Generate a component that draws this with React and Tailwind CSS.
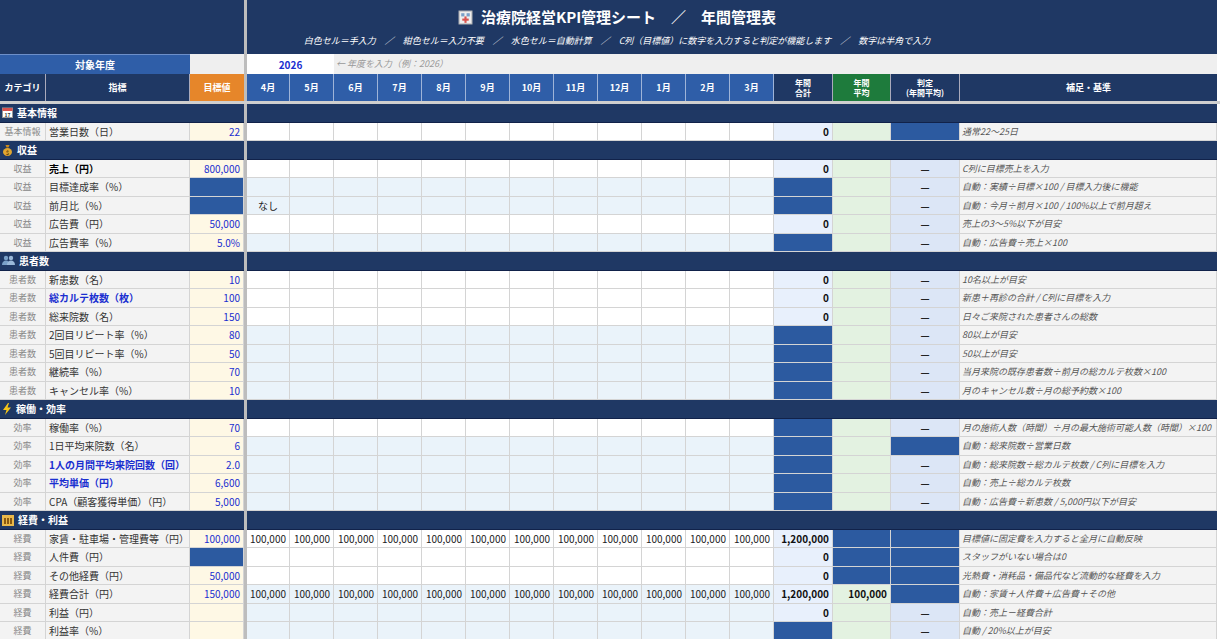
const F = '"Noto Sans CJK JP", "Liberation Sans", sans-serif';
const COLS = 'grid grid-cols-[46px_144px_54px_3px_43px_44px_44px_44px_44px_44px_44px_44px_44px_44px_44px_44px_59px_58px_69px_257px]';
const months = ['4月','5月','6月','7月','8月','9月','10月','11月','12月','1月','2月','3月'];
const B = 'border-r border-b border-[#d4d4d4]';

const rows = [
 {h:'基本情報', ic:'cal'},
 {c:'基本情報',l:'営業日数（日）',t:'22',m:'w',tot:'0',j:'fill',n:'通常22〜25日'},
 {h:'収益', ic:'bag'},
 {c:'収益',l:'売上（円）',lb:'k',t:'800,000',m:'w',tot:'0',j:'—',n:'C列に目標売上を入力'},
 {c:'収益',l:'目標達成率（%）',t:'fill',m:'b',tot:'fill',j:'—',n:'自動：実績÷目標×100 / 目標入力後に機能'},
 {c:'収益',l:'前月比（%）',t:'fill',m:'b',first:'なし',tot:'fill',j:'—',n:'自動：今月÷前月×100 / 100%以上で前月超え'},
 {c:'収益',l:'広告費（円）',t:'50,000',m:'w',tot:'0',j:'—',n:'売上の3〜5%以下が目安'},
 {c:'収益',l:'広告費率（%）',t:'5.0%',m:'b',tot:'fill',j:'—',n:'自動：広告費÷売上×100'},
 {h:'患者数', ic:'ppl'},
 {c:'患者数',l:'新患数（名）',t:'10',m:'w',tot:'0',j:'—',n:'10名以上が目安'},
 {c:'患者数',l:'総カルテ枚数（枚）',lb:'b',t:'100',m:'w',tot:'0',j:'—',n:'新患＋再診の合計 / C列に目標を入力'},
 {c:'患者数',l:'総来院数（名）',t:'150',m:'w',tot:'0',j:'—',n:'日々ご来院された患者さんの総数'},
 {c:'患者数',l:'2回目リピート率（%）',t:'80',m:'b',tot:'fill',j:'—',n:'80以上が目安'},
 {c:'患者数',l:'5回目リピート率（%）',t:'50',m:'b',tot:'fill',j:'—',n:'50以上が目安'},
 {c:'患者数',l:'継続率（%）',t:'70',m:'b',tot:'fill',j:'—',n:'当月来院の既存患者数÷前月の総カルテ枚数×100'},
 {c:'患者数',l:'キャンセル率（%）',t:'10',m:'b',tot:'fill',j:'—',n:'月のキャンセル数÷月の総予約数×100'},
 {h:'稼働・効率', ic:'bolt'},
 {c:'効率',l:'稼働率（%）',t:'70',m:'w',tot:'fill',j:'—',n:'月の施術人数（時間）÷月の最大施術可能人数（時間）×100'},
 {c:'効率',l:'1日平均来院数（名）',t:'6',m:'b',tot:'fill',j:'fill',n:'自動：総来院数÷営業日数'},
 {c:'効率',l:'1人の月間平均来院回数（回）',lb:'b',t:'2.0',m:'b',tot:'fill',j:'—',n:'自動：総来院数÷総カルテ枚数 / C列に目標を入力'},
 {c:'効率',l:'平均単価（円）',lb:'b',t:'6,600',m:'b',tot:'fill',j:'—',n:'自動：売上÷総カルテ枚数'},
 {c:'効率',l:'CPA（顧客獲得単価）（円）',t:'5,000',m:'b',tot:'fill',j:'—',n:'自動：広告費÷新患数 / 5,000円以下が目安'},
 {h:'経費・利益', ic:'bank'},
 {c:'経費',l:'家賃・駐車場・管理費等（円）',t:'100,000',m:'w',mv:'100,000',tot:'1,200,000',avg:'fill',j:'fill',n:'目標値に固定費を入力すると全月に自動反映'},
 {c:'経費',l:'人件費（円）',t:'fill',m:'w',tot:'0',avg:'fill',j:'fill',n:'スタッフがいない場合は0'},
 {c:'経費',l:'その他経費（円）',t:'50,000',m:'w',tot:'0',avg:'fill',j:'fill',n:'光熱費・消耗品・備品代など流動的な経費を入力'},
 {c:'経費',l:'経費合計（円）',t:'150,000',m:'b',mv:'100,000',tot:'1,200,000',avg:'100,000',j:'fill',n:'自動：家賃＋人件費＋広告費＋その他'},
 {c:'経費',l:'利益（円）',t:'',m:'b',tot:'0',j:'—',n:'自動：売上－経費合計'},
 {c:'経費',l:'利益率（%）',t:'',m:'b',tot:'fill',j:'—',n:'自動 / 20%以上が目安'},
];

function Icon({k}) {
  if (k==='cal') return (<svg width="11" height="11" viewBox="0 0 11 11"><rect x="0.5" y="1" width="10" height="9.5" fill="#fff" stroke="#999"/><rect x="0.5" y="1" width="10" height="3" fill="#d9534f"/><text x="5.5" y="9.5" fontSize="5" textAnchor="middle" fill="#333">17</text></svg>);
  if (k==='bag') return (<svg width="11" height="12" viewBox="0 0 11 12"><path d="M3.5 1h4l-1 2.5h-2z" fill="#c98a1d"/><ellipse cx="5.5" cy="8" rx="4.5" ry="4" fill="#e0a630"/><text x="5.5" y="10.5" fontSize="6" textAnchor="middle" fill="#6b4a0a">$</text></svg>);
  if (k==='ppl') return (<svg width="13" height="11" viewBox="0 0 13 11"><circle cx="4" cy="3" r="2.2" fill="#7aa0c8"/><path d="M0 10c0-3 1.8-4.5 4-4.5S8 7 8 10z" fill="#7aa0c8"/><circle cx="9" cy="3" r="2.2" fill="#9ab8d8"/><path d="M5 10c0-3 1.8-4.5 4-4.5S13 7 13 10z" fill="#9ab8d8"/></svg>);
  if (k==='bolt') return (<svg width="10" height="12" viewBox="0 0 10 12"><path d="M6 0L1 7h3.5L3 12l6-7.5H5.5L7 0z" fill="#f5c518"/></svg>);
  if (k==='bank') return (<svg width="12" height="12" viewBox="0 0 12 12"><rect x="0" y="1" width="12" height="11" fill="#e9b84a"/><rect x="2" y="4" width="2" height="6" fill="#8a5a10"/><rect x="5" y="4" width="2" height="6" fill="#8a5a10"/><rect x="8" y="4" width="2" height="6" fill="#8a5a10"/></svg>);
  return (<svg width="15" height="15" viewBox="0 0 14 14"><rect x="1" y="1" width="12" height="12" fill="#eee" stroke="#bbb"/><rect x="3" y="3" width="3" height="3" fill="#7aa0c8"/><rect x="8" y="3" width="3" height="3" fill="#7aa0c8"/><rect x="6" y="6" width="2" height="6" fill="#d9534f"/><rect x="4" y="8" width="6" height="2" fill="#d9534f"/></svg>);
}

const Fill = () => <div className={`${B} bg-[#2c5aa0]`} />;

function Row({r}) {
  if (r.h) return (
    <div className={`${COLS} h-[18.5px]`}>
      <div className="col-span-3 bg-[#1f3864] border-b border-[#11224a] flex items-center gap-1 pl-[2px] text-white font-bold text-[10px]"><Icon k={r.ic}/>{r.h}</div>
      <div className="bg-[#bdbdbd]" />
      <div className="col-span-16 bg-[#1f3864] border-b border-[#11224a]" />
    </div>
  );
  const mbg = r.m==='w' ? 'bg-white' : 'bg-[#eaf3fa]';
  const lc = r.lb==='b' ? 'font-bold text-[#1a2fd0]' : r.lb==='k' ? 'font-bold text-black' : 'text-[#333]';
  return (
    <div className={`${COLS} h-[18.5px] text-[10px]`}>
      <div className={`${B} bg-[#f3f3f3] text-[#888] text-[9px] flex items-center justify-center`}>{r.c}</div>
      <div className={`${B} bg-[#f3f3f3] flex items-center pl-[3px] ${lc}`}>{r.l}</div>
      {r.t==='fill' ? <Fill/> : <div className={`${B} bg-[#fef8e5] text-[#1a2fd0] flex items-center justify-end pr-[3px]`}>{r.t}</div>}
      <div className="bg-[#bdbdbd]" />
      {months.map((m,i)=>(
        <div key={i} className={`${B} ${mbg} flex items-center text-[#222] ${r.mv ? 'justify-end pr-[3px]' : 'justify-center'}`}>{r.mv || (i===0 && r.first) || ''}</div>
      ))}
      {r.tot==='fill' ? <Fill/> : <div className={`${B} bg-[#e8f0fc] font-bold text-[#111] flex items-center justify-end pr-[3px]`}>{r.tot}</div>}
      {r.avg==='fill' ? <Fill/> : <div className={`${B} bg-[#e3f2e1] font-bold text-[#111] flex items-center justify-end pr-[3px]`}>{r.avg||''}</div>}
      {r.j==='fill' ? <Fill/> : <div className={`${B} bg-[#dce6f6] font-bold text-[#222] flex items-center justify-center`}>—</div>}
      <div className={`${B} bg-[#f3f3f3] italic text-[#555] flex items-center pl-[2px] text-[9px] whitespace-nowrap overflow-hidden`}>{r.n}</div>
    </div>
  );
}

export default function App() {
  return (
    <div className="w-[1220px] h-[639px] overflow-hidden bg-white" style={{fontFamily: F}}>
      <div className={`${COLS} h-[54px]`}>
        <div className="col-span-3 bg-[#1f3864]" />
        <div className="bg-[#bdbdbd]" />
        <div className="col-span-16 bg-[#1f3864] flex flex-col items-center text-white pr-[230px]">
          <div className="h-[34px] flex items-center gap-2 text-[15px] font-bold"><Icon k="hosp"/>治療院経営KPI管理シート　／　年間管理表</div>
          <div className="text-[9px] italic">白色セル＝手入力　／　紺色セル＝入力不要　／　水色セル＝自動計算　／　C列（目標値）に数字を入力すると判定が機能します　／　数字は半角で入力</div>
        </div>
      </div>
      <div className={`${COLS} h-[20px] text-[10px]`}>
        <div className="col-span-2 bg-[#2f5ea8] text-white font-bold flex items-center justify-center border-t border-[#6d8fc9]">対象年度</div>
        <div className="bg-[#efefef]" />
        <div className="bg-[#bdbdbd]" />
        <div className="col-span-2 bg-white text-[#1a2fd0] font-bold flex items-center justify-center">2026</div>
        <div className="col-span-14 bg-[#efefef] italic text-[#999] text-[9px] flex items-center pl-[2px]">← 年度を入力（例：2026）</div>
      </div>
      <div className={`${COLS} h-[30px] text-[8px] font-bold text-white leading-[10px] border-b-[3px] border-[#cfcfcf]`}>
        <div className="bg-[#1f3864] border-r border-[#aab] flex items-center justify-center text-[9px]">カテゴリ</div>
        <div className="bg-[#1f3864] border-r border-[#aab] flex items-center justify-center text-[9px]">指標</div>
        <div className="bg-[#e6862a] flex items-center justify-center text-[9px]">目標値</div>
        <div className="bg-[#bdbdbd]" />
        {months.map(m=><div key={m} className="bg-[#2f5ea8] border-r border-[#9fb4d8] flex items-center justify-center text-[9px]">{m}</div>)}
        <div className="bg-[#1f3864] border-r border-[#aab] flex flex-col items-center justify-center"><span>年間</span><span>合計</span></div>
        <div className="bg-[#1e7b3c] border-r border-[#aab] flex flex-col items-center justify-center"><span>年間</span><span>平均</span></div>
        <div className="bg-[#1f3864] border-r border-[#aab] flex flex-col items-center justify-center"><span>判定</span><span>(年間平均)</span></div>
        <div className="bg-[#1f3864] flex items-center justify-center text-[9px]">補足・基準</div>
      </div>
      {rows.map((r,i)=><Row key={i} r={r}/>)}
    </div>
  );
}
